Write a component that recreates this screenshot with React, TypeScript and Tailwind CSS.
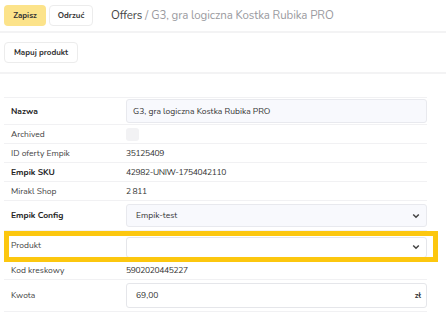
import React from 'react';

const font = { fontFamily: '"Nunito", "Lato", "Noto Sans", sans-serif' };

const Chevron: React.FC = () => (
  <svg width="8" height="6" viewBox="0 0 8 6" className="text-[#444]">
    <path d="M1.2 1.5 L4 4.3 L6.8 1.5" fill="none" stroke="currentColor" strokeWidth="1.5" />
  </svg>
);

interface RowProps {
  label: string;
  bold?: boolean;
  className?: string;
  children: React.ReactNode;
}

const Row: React.FC<RowProps> = ({ label, bold, className, children }) => (
  <div className={`flex items-center border-b border-[#f1f1f3] ${className ?? ''}`}>
    <div className={`w-[122px] pl-[7px] text-[8.5px] ${bold ? 'font-bold text-[#222]' : 'text-[#444]'}`}>
      {label}
    </div>
    <div className="flex-1 text-[8.5px] tracking-[-0.35px] text-[#333]">{children}</div>
  </div>
);

const App: React.FC = () => {
  return (
    <div className="w-[446px] h-[326px] bg-white overflow-hidden" style={font}>
      <div className="flex items-center h-[33px] px-1 gap-[3px] border-b-2 border-[#f3f3f4]">
        <button className="h-[21px] w-[42px] rounded-[4px] bg-[#fce38a] text-[8px] font-bold text-[#333]">
          Zapisz
        </button>
        <button className="h-[21px] w-[44px] rounded-[4px] border border-[#ececec] bg-white text-[8px] font-bold text-[#333]">
          Odrzuć
        </button>
        <div className="ml-[15px] text-[11.5px] tracking-[-0.1px] text-[#444]">
          Offers <span className="text-[#9a9aa0]">/ G3, gra logiczna Kostka Rubika PRO</span>
        </div>
      </div>

      <div className="flex items-center h-[41px] px-1 border-b-2 border-[#f3f3f4]">
        <button className="h-[21px] w-[74px] rounded-[4px] border border-[#ececec] bg-white text-[8px] font-bold text-[#333]">
          Mapuj produkt
        </button>
      </div>

      <div className="pt-[23px] pl-1 w-[427px]">
        <div className="border-t border-[#f1f1f3]">
          <Row label="Nazwa" bold className="h-[27px]">
            <div className="h-[24px] flex items-center rounded-[3px] border border-[#e8e9ee] bg-[#f8f9fd] px-[6px] tracking-normal">
              G3, gra logiczna Kostka Rubika PRO
            </div>
          </Row>
          <Row label="Archived" className="h-[19px]">
            <div className="w-[13px] h-[13px] rounded-[3px] bg-[#f2f2f4]" />
          </Row>
          <Row label="ID oferty Empik" className="h-[19px]">
            35125409
          </Row>
          <Row label="Empik SKU" bold className="h-[19px]">
            42982-UNIW-1754042110
          </Row>
          <Row label="Mirakl Shop" className="h-[19px]">
            2 811
          </Row>
          <Row label="Empik Config" bold className="h-[30px]">
            <div className="h-[23px] flex items-center justify-between rounded-[3px] border border-[#e8e9ee] bg-[#f8f9fd] pl-[9px] pr-[6px] tracking-normal">
              <span>Empik-test</span>
              <Chevron />
            </div>
          </Row>
          <div className="relative">
            <Row label="Produkt" className="h-[30px]">
              <div className="h-[21px] mt-[3px] flex items-center justify-end rounded-[3px] border border-[#e5e6ea] bg-white pr-[6px]">
                <Chevron />
              </div>
            </Row>
            <div className="absolute left-0 top-0 w-[434px] h-[31px] border-[5px] border-[#fcc70f] pointer-events-none" />
          </div>
          <Row label="Kod kreskowy" className="h-[19px]">
            5902020445227
          </Row>
          <Row label="Kwota" className="h-[32px]">
            <div className="h-[25px] flex items-center justify-between rounded-[3px] border border-[#e5e6ea] bg-white pl-[9px] pr-[5px] tracking-normal">
              <span>69,00</span>
              <span className="text-[8px] font-bold">zł</span>
            </div>
          </Row>
        </div>
      </div>
    </div>
  );
};

export default App;
